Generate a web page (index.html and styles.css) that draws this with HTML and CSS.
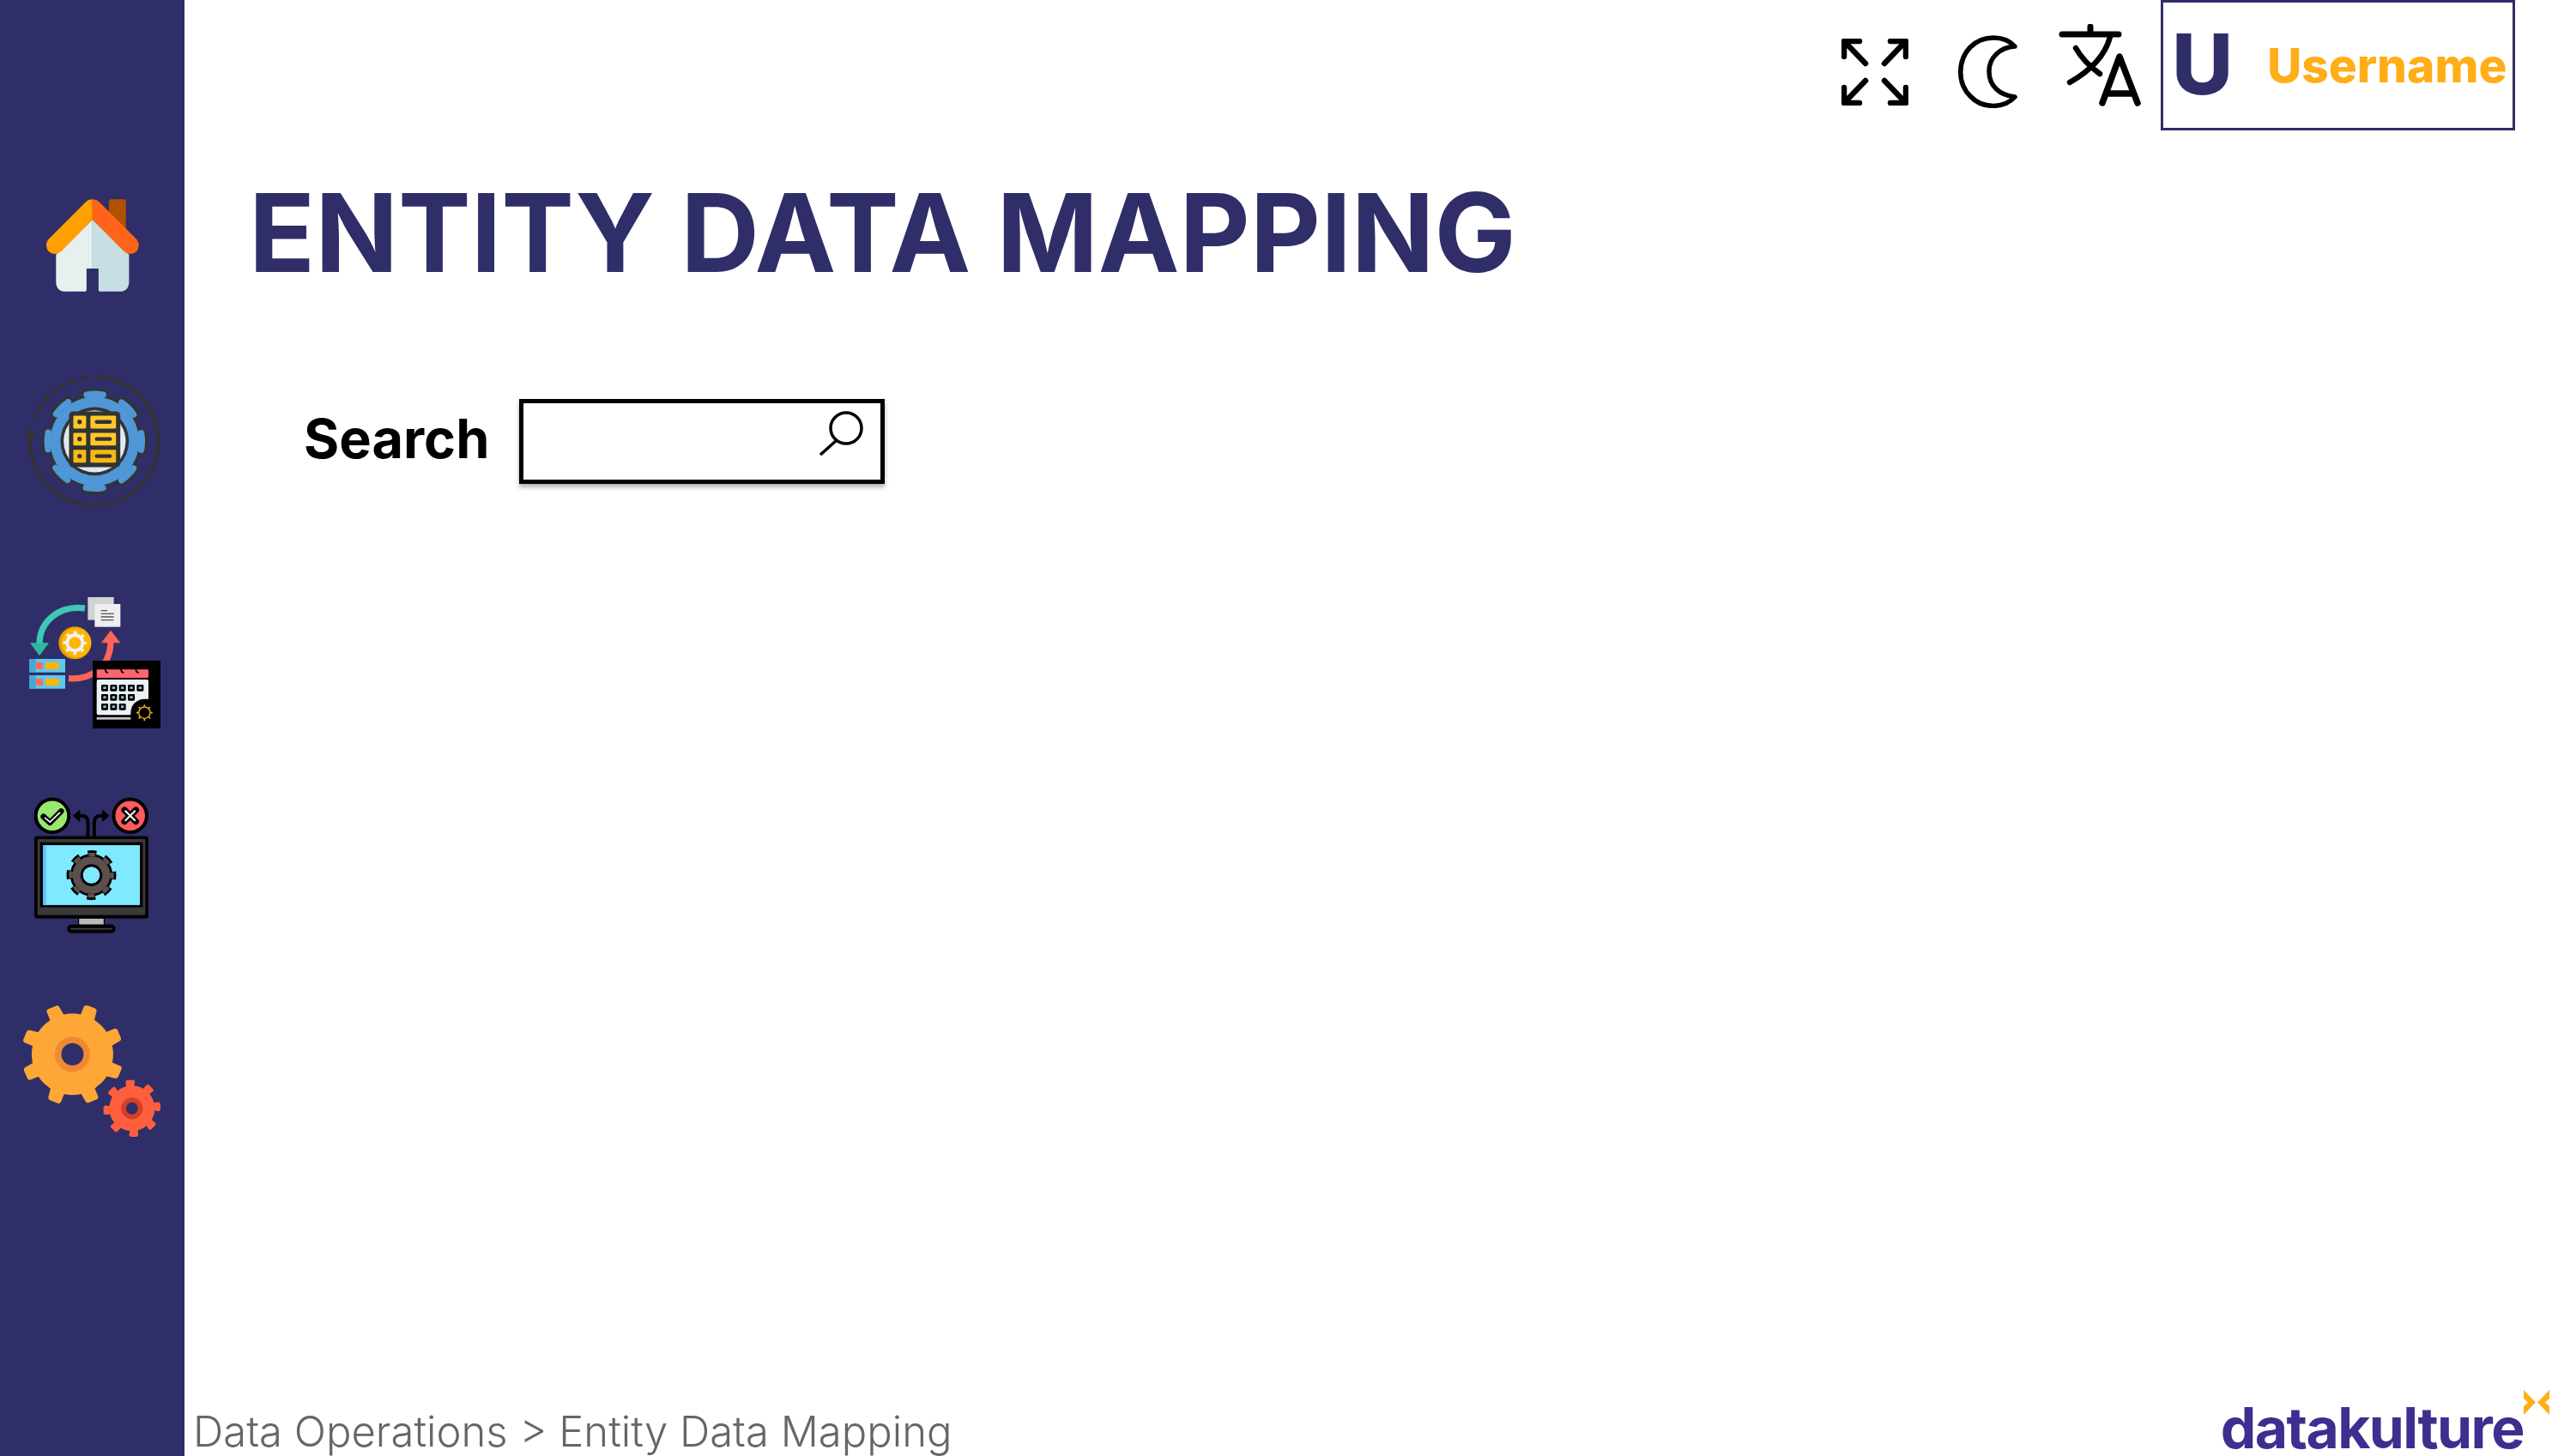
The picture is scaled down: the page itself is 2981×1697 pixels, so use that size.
FILE: index.html
```html
<!DOCTYPE html>
<html lang="en">
<head>
<meta charset="utf-8">
<title>Entity Data Mapping</title>
<link rel="stylesheet" href="styles.css">
</head>
<body>
<div class="app">
  <aside class="sidebar">
    <nav class="side-nav">
      <a class="side-item side-home">
        <svg class="ic-home" viewBox="162 96 325 324">
          <rect x="381" y="96" width="60" height="130" rx="8" fill="#b35000"/>
          <path d="M324 168 L196 290 V385 Q196 420 231 420 H296 Q303 420 303 412 V339 H324 Z" fill="#e6f0ef"/>
          <path d="M324 168 L452 290 V385 Q452 420 417 420 H352 Q345 420 345 412 V339 H324 Z" fill="#c7dfe3"/>
          <path d="M324 96 Q310 96 300 106 L172 234 Q162 244 162 258 Q164 288 192 288 Q205 288 214 279 L324 168 Z" fill="#ff9f00"/>
          <path d="M324 96 Q338 96 348 106 L476 234 Q486 244 486 258 Q484 288 456 288 Q443 288 434 279 L324 168 Z" fill="#ff641a"/>
        </svg>
      </a>
      <a class="side-item side-entity">
        <svg class="ic-entity" viewBox="80 710 483 467">
          <path d="M330 716 A226 226 0 1 1 103 925" fill="none" stroke="#333" stroke-width="12"/>
          <path d="M300 719 A226 226 0 0 0 116 870" fill="none" stroke="#333" stroke-width="14" stroke-dasharray="14 24" stroke-linecap="round"/>
          <path d="M81 927 L126 927 L103 897 Z" fill="#333"/>
          <circle cx="330" cy="943" r="166" fill="#333"/>
          <circle cx="330" cy="943" r="170" fill="none" stroke="#333" stroke-width="34" stroke-dasharray="60 73.5" stroke-dashoffset="30" stroke-linecap="round" transform="rotate(-90 330 943)"/>
          <circle cx="330" cy="943" r="156" fill="#4f97d6"/>
          <circle cx="330" cy="943" r="166" fill="none" stroke="#4f97d6" stroke-width="22" stroke-dasharray="60 70.4" stroke-dashoffset="30" stroke-linecap="round" transform="rotate(-90 330 943)"/>
          <circle cx="330" cy="943" r="120" fill="#333"/>
          <circle cx="330" cy="943" r="109" fill="#dfeaf5"/>
          <rect x="240" y="838" width="180" height="196" rx="14" fill="#333"/>
          <rect x="255" y="853" width="45" height="45" rx="4" fill="#ffc72a"/>
          <rect x="315" y="853" width="90" height="45" rx="4" fill="#ffc72a"/>
          <rect x="255" y="913" width="45" height="45" rx="4" fill="#ffc72a"/>
          <rect x="315" y="913" width="90" height="45" rx="4" fill="#ffc72a"/>
          <rect x="255" y="973" width="45" height="45" rx="4" fill="#f5b915"/>
          <rect x="315" y="973" width="90" height="45" rx="4" fill="#f5b915"/>
          <circle cx="277" cy="875" r="8" fill="#333"/>
          <circle cx="277" cy="935" r="8" fill="#333"/>
          <circle cx="277" cy="995" r="8" fill="#333"/>
          <path d="M337 875 H384 M337 935 H384 M337 995 H384" stroke="#333" stroke-width="13" stroke-linecap="round"/>
        </svg>
      </a>
      <a class="side-item side-schedule">
        <svg class="ic-schedule" viewBox="102 108 459 459">
          <path d="M297 147 C210 135 138 190 138 272" fill="none" stroke="#3cc8b4" stroke-width="22"/>
          <path d="M105 268 H171 L138 313 Z" fill="#2fb7a2"/>
          <rect x="307" y="108" width="91" height="80" fill="#d2d2d2"/>
          <rect x="331" y="132" width="90" height="80" fill="#eeeeee"/>
          <path d="M353 155 H375 M353 166 H398 M353 177 H398 M353 188 H398" stroke="#555" stroke-width="4"/>
          <circle cx="262" cy="268" r="57" fill="#e19d00"/>
          <circle cx="267" cy="268" r="52" fill="#ffb400"/>
          <circle cx="262" cy="268" r="27" fill="none" stroke="#f2f2f2" stroke-width="12"/>
          <circle cx="262" cy="268" r="36" fill="none" stroke="#f2f2f2" stroke-width="11" stroke-dasharray="11 17.3" stroke-dashoffset="5.5"/>
          <path d="M240 392 C320 398 387 350 387 262" fill="none" stroke="#ff6459" stroke-width="22"/>
          <path d="M354 268 H421 L387 224 Z" fill="#ff6459"/>
          <rect x="103" y="324" width="125" height="47" fill="#5fc8ef"/>
          <rect x="103" y="324" width="22" height="47" fill="#48a8d0"/>
          <rect x="126" y="336" width="24" height="24" fill="#ff6b5b"/>
          <rect x="160" y="336" width="46" height="24" fill="#ffb400"/>
          <rect x="103" y="381" width="125" height="47" fill="#5fc8ef"/>
          <rect x="103" y="381" width="22" height="47" fill="#48a8d0"/>
          <rect x="126" y="393" width="24" height="24" fill="#ff6b5b"/>
          <rect x="160" y="393" width="46" height="24" fill="#ffb400"/>
          <rect x="324" y="330" width="237" height="237" fill="#000"/>
          <rect x="338" y="361" width="181" height="29" rx="3" fill="#ff6473"/>
          <rect x="338" y="396" width="181" height="124" rx="6" fill="#eef1f3"/>
          <rect x="338" y="528" width="124" height="8" fill="#c5c8ca"/>
          <path d="M368 358 Q368 372 378 372 M423 358 Q423 372 433 372 M475 358 Q475 372 485 372" fill="none" stroke="#000" stroke-width="5"/>
          <g fill="#000">
            <rect x="354" y="414" width="24" height="23" rx="4"/><rect x="385" y="414" width="24" height="23" rx="4"/><rect x="416" y="414" width="24" height="23" rx="4"/><rect x="447" y="414" width="24" height="23" rx="4"/><rect x="478" y="414" width="24" height="23" rx="4"/>
            <rect x="354" y="447" width="24" height="23" rx="4"/><rect x="385" y="447" width="24" height="23" rx="4"/><rect x="416" y="447" width="24" height="23" rx="4"/><rect x="447" y="447" width="24" height="23" rx="4"/>
            <rect x="354" y="480" width="24" height="23" rx="4"/><rect x="385" y="480" width="24" height="23" rx="4"/><rect x="416" y="480" width="24" height="23" rx="4"/>
          </g>
          <g fill="#82c8f5">
            <rect x="361" y="421" width="10" height="8"/><rect x="392" y="421" width="10" height="8"/><rect x="423" y="421" width="10" height="8"/><rect x="454" y="421" width="10" height="8"/><rect x="485" y="421" width="10" height="8"/>
            <rect x="361" y="454" width="10" height="8"/><rect x="392" y="454" width="10" height="8"/><rect x="423" y="454" width="10" height="8"/><rect x="454" y="454" width="10" height="8"/>
            <rect x="361" y="487" width="10" height="8"/><rect x="392" y="487" width="10" height="8"/><rect x="423" y="487" width="10" height="8"/>
          </g>
          <path d="M457 540 V512 A48 48 0 0 1 505 464 H525 V540 Z" fill="#000"/>
          <circle cx="505" cy="512" r="20" fill="none" stroke="#f4b32b" stroke-width="4"/>
          <path d="M505 484 V490 M505 534 V540 M477 512 H483 M527 512 H533 M485 492 L490 497 M520 527 L525 532 M525 492 L520 497 M490 527 L485 532" stroke="#f4b32b" stroke-width="5"/>
        </svg>
      </a>
      <a class="side-item side-monitor">
        <svg class="ic-monitor" viewBox="120 88 400 475">
          <path d="M308 226 V175 Q308 152 285 152 H266 M330 226 V175 Q330 152 353 152 H372" fill="none" stroke="#000" stroke-width="12"/>
          <path d="M255 152 L280 130 V174 Z M383 152 L358 130 V174 Z" fill="#000"/>
          <circle cx="183" cy="152" r="58" fill="#98e86f" stroke="#000" stroke-width="12"/>
          <path d="M152 155 L175 176 L214 136" fill="none" stroke="#000" stroke-width="20" stroke-linecap="round" stroke-linejoin="round"/>
          <path d="M156 158 L175 174 L210 140" fill="none" stroke="#fff" stroke-width="5"/>
          <circle cx="456" cy="152" r="58" fill="#ff5a5f" stroke="#000" stroke-width="12"/>
          <path d="M436 132 L476 172 M476 132 L436 172" fill="none" stroke="#000" stroke-width="22" stroke-linecap="round"/>
          <path d="M438 134 L474 170 M474 134 L438 170" fill="none" stroke="#fff" stroke-width="6"/>
          <rect x="275" y="510" width="90" height="26" fill="#bbb" stroke="#000" stroke-width="4"/>
          <rect x="235" y="533" width="170" height="30" rx="15" fill="#000"/>
          <rect x="247" y="546" width="146" height="5" rx="2" fill="#444"/>
          <rect x="120" y="223" width="400" height="289" rx="10" fill="#000"/>
          <rect x="131" y="234" width="378" height="266" rx="4" fill="#3a3a3a"/>
          <rect x="140" y="245" width="360" height="228" fill="#000"/>
          <rect x="150" y="255" width="340" height="210" fill="#7fe9ff"/>
          <rect x="150" y="255" width="12" height="210" fill="#64c1ff"/>
          <circle cx="320" cy="360" r="70" fill="#5d4f4b" stroke="#000" stroke-width="8"/>
          <circle cx="320" cy="360" r="76" fill="none" stroke="#000" stroke-width="22" stroke-dasharray="30 29.7" stroke-dashoffset="15"/>
          <circle cx="320" cy="360" r="72" fill="none" stroke="#5d4f4b" stroke-width="14" stroke-dasharray="24 32.5" stroke-dashoffset="12"/>
          <circle cx="320" cy="360" r="34" fill="#7fe9ff" stroke="#000" stroke-width="9"/>
        </svg>
      </a>
      <a class="side-item side-settings">
        <svg class="ic-settings" viewBox="80 815 485 462">
          <g fill="#ffa736">
            <circle cx="253" cy="985" r="143"/>
            <path id="big-tooth" d="M226 852 L206 818 Q201 812 193 816 L167 827 Q160 831 164 840 L180 878 Z"/>
            <use href="#big-tooth" transform="rotate(45 253 985)"/>
            <use href="#big-tooth" transform="rotate(90 253 985)"/>
            <use href="#big-tooth" transform="rotate(135 253 985)"/>
            <use href="#big-tooth" transform="rotate(180 253 985)"/>
            <use href="#big-tooth" transform="rotate(225 253 985)"/>
            <use href="#big-tooth" transform="rotate(270 253 985)"/>
            <use href="#big-tooth" transform="rotate(315 253 985)"/>
          </g>
          <circle cx="253" cy="985" r="62" fill="#ef8a32"/>
          <circle cx="253" cy="985" r="39" fill="#2f2e69"/>
          <g fill="#ff5f3c">
            <circle cx="462" cy="1175" r="80"/>
            <path id="small-tooth" d="M442 1105 L440 1083 Q440 1075 448 1075 L466 1075 Q473 1076 472 1083 L468 1105 Z"/>
            <use href="#small-tooth" transform="rotate(45 462 1175)"/>
            <use href="#small-tooth" transform="rotate(90 462 1175)"/>
            <use href="#small-tooth" transform="rotate(135 462 1175)"/>
            <use href="#small-tooth" transform="rotate(180 462 1175)"/>
            <use href="#small-tooth" transform="rotate(225 462 1175)"/>
            <use href="#small-tooth" transform="rotate(270 462 1175)"/>
            <use href="#small-tooth" transform="rotate(315 462 1175)"/>
          </g>
          <circle cx="462" cy="1175" r="38" fill="#d43f27"/>
          <circle cx="462" cy="1175" r="21" fill="#2f2e69"/>
        </svg>
      </a>
    </nav>
  </aside>

  <main class="main">
    <header class="topbar">
      <svg class="ic-expand" viewBox="0 0 78 78" fill="none" stroke="#000" stroke-width="6.5" stroke-linecap="round" stroke-linejoin="round">
        <path d="M3 21 V3 H21 M3 3 L28 29 M75 21 V3 H57 M75 3 L50 29 M3 57 V75 H21 M3 75 L28 49 M75 57 V75 H57 M75 75 L50 49"/>
      </svg>
      <svg class="ic-moon" viewBox="0 0 70 85" fill="none" stroke="#000" stroke-width="5.5" stroke-linejoin="round">
        <path d="M67 13 C55 0 30 -1 15 14 C0 30 0 56 15 71 C30 87 55 85 67 72 C50 70 37 60 37 42 C37 26 50 14 67 13 Z"/>
      </svg>
      <svg class="ic-translate" viewBox="0 0 97 96" fill="none" stroke="#000" stroke-linecap="round" stroke-linejoin="round">
        <path stroke-width="7" d="M4 12 H70 M37 3 V10"/>
        <path stroke-width="6.5" d="M60 15 C54 38 36 55 13 68 M20 28 C28 42 37 50 48 58"/>
        <path stroke-width="7.5" d="M51 92 L71 38 L92 92 M58 81 H85"/>
      </svg>
      <div class="user-box">
        <span class="user-initial">U</span>
        <span class="user-name">Username</span>
      </div>
    </header>

    <h1 class="page-title">ENTITY DATA MAPPING</h1>

    <div class="search-row">
      <label class="search-label">Search</label>
      <div class="search-box">
        <svg class="ic-search" viewBox="0 0 52 52" fill="none" stroke="#000" stroke-width="3.5">
          <circle cx="32" cy="20" r="18"/>
          <path d="M20 35 L2 51"/>
        </svg>
      </div>
    </div>

    <footer class="footer">
      <span class="breadcrumb">Data Operations &gt; Entity Data Mapping</span>
      <div class="logo">
        <span class="logo-text">datakulture</span>
        <svg class="logo-mark" viewBox="0 0 30 29" fill="#ffae18">
          <path d="M0 0 L14 14.5 L0 29 V19 L5 14.5 L0 10 Z"/>
          <path d="M30 0 L16 14.5 L30 29 V19 L25 14.5 L30 10 Z"/>
        </svg>
      </div>
    </footer>
  </main>
</div>
</body>
</html>
```
FILE: styles.css
```css
* { box-sizing: border-box; }
html, body { margin: 0; padding: 0; height: 100%; background: #fff; overflow: hidden; }
body { font-family: Inter, "Liberation Sans", sans-serif; }
.app { display: flex; height: 1697px; }

.sidebar { width: 215px; flex: none; background: #2f2e69; }
.side-nav { display: flex; flex-direction: column; padding-top: 232px; }
.side-item { display: block; line-height: 0; }
.side-item svg { display: block; }
.side-entity { margin-top: 97px; }
.side-schedule { margin-top: 104px; }
.side-monitor { margin-top: 80px; }
.side-settings { margin-top: 84px; }
.ic-home { width: 108px; height: 108px; margin-left: 54px; }
.ic-entity { width: 161px; height: 155px; margin-left: 27px; }
.ic-schedule { width: 153px; height: 153px; margin-left: 34px; }
.ic-monitor { width: 133px; height: 159px; margin-left: 40px; }
.ic-settings { width: 161px; height: 154px; margin-left: 27px; }

.main { flex: 1; min-width: 0; display: flex; flex-direction: column; }
.topbar { display: flex; justify-content: flex-end; align-items: flex-start; height: 152px; padding-right: 50px; }
.ic-expand { width: 78px; height: 78px; margin-top: 45px; }
.ic-moon { width: 70px; height: 85px; margin-top: 41px; margin-left: 57px; }
.ic-translate { width: 97px; height: 96px; margin-top: 28px; margin-left: 48px; }
.user-box { width: 413px; height: 152px; margin-left: 22px; border: 3px solid #2f2e69; display: flex; align-items: center; }
.user-initial { color: #2f2e69; font-weight: 800; font-size: 98px; line-height: 1; margin-left: 10px; margin-top: -2px; }
.user-name { color: #ffae18; font-weight: 800; font-size: 55px; line-height: 1; margin-left: 40px; margin-top: 1px; white-space: nowrap; }

.page-title { margin: 43px 0 0 75px; color: #2f2e69; font-size: 127px; font-weight: 700; line-height: 1.2; white-space: nowrap; }

.search-row { display: flex; align-items: flex-start; margin: 118px 0 0 139px; }
.search-label { font-size: 63px; font-weight: 700; color: #000; line-height: 1; margin-top: 15px; }
.search-box { width: 426px; height: 99px; margin-left: 35px; border: 5px solid #000; background: #fff; box-shadow: 0 4px 5px rgba(0,0,0,.3); display: flex; justify-content: flex-end; align-items: flex-start; padding: 9px 20px 0 0; }
.ic-search { width: 52px; height: 52px; }

.footer { margin-top: auto; display: flex; justify-content: space-between; align-items: flex-end; padding: 0 10px 0 10px; }
.breadcrumb { font-size: 49px; font-weight: 300; color: #666; line-height: 1; white-space: nowrap; padding-bottom: 4px; }
.logo { display: flex; align-items: flex-start; }
.logo-text { color: #3c2f8f; font-size: 66px; font-weight: 700; letter-spacing: -1.6px; line-height: 1; }
.logo-mark { width: 30px; height: 29px; margin-top: -11px; }
```
